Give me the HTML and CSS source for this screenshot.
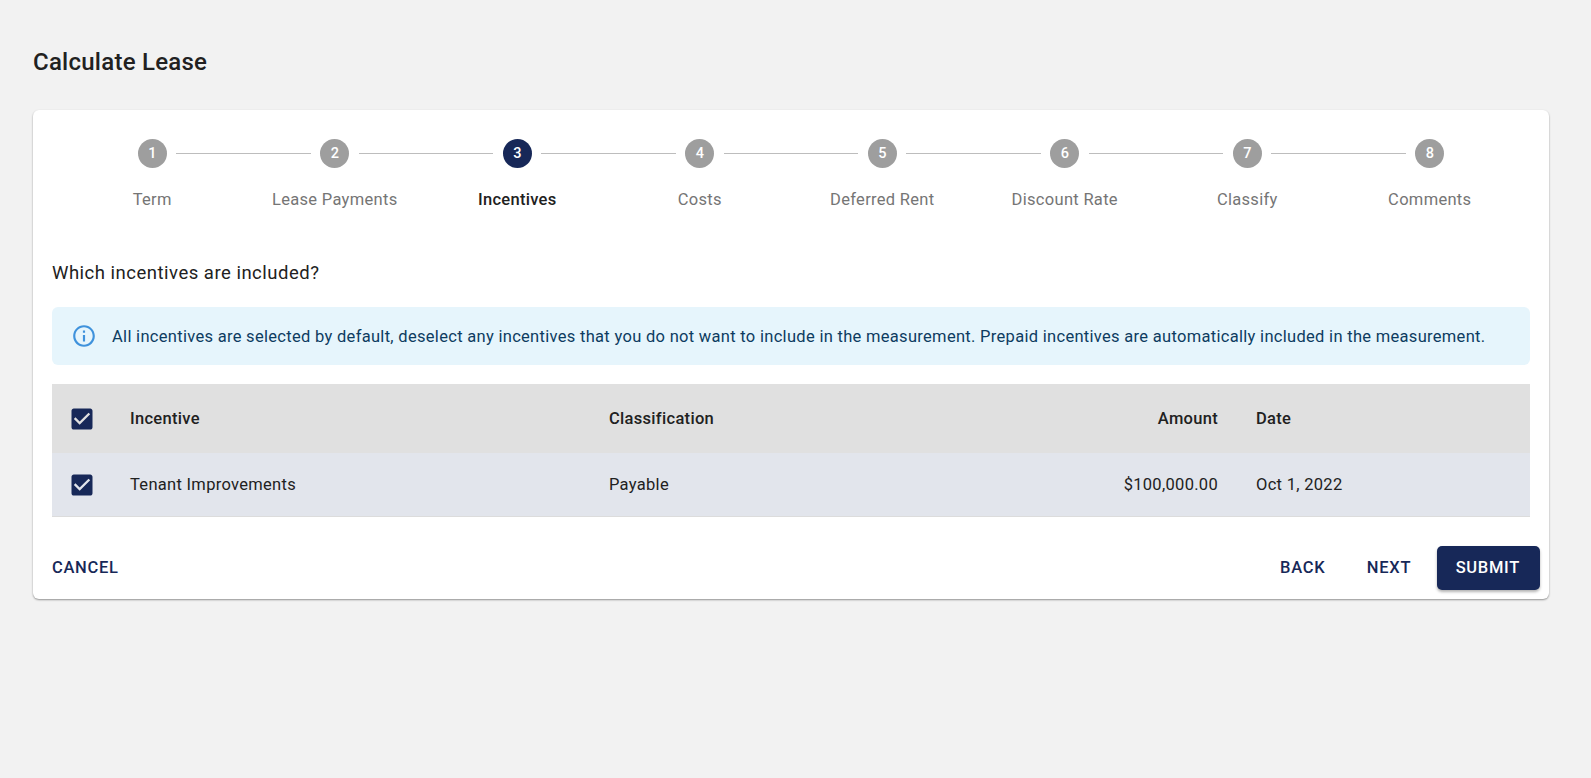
FILE: index.html
```html
<!DOCTYPE html>
<html lang="en">
<head>
<meta charset="utf-8">
<title>Calculate Lease</title>
<link rel="stylesheet" href="styles.css">
</head>
<body>
<main class="page">
  <h1 class="title">Calculate Lease</h1>
  <section class="card">
    <ol class="stepper">
      <li class="step"><span class="dot">1</span><span class="label">Term</span></li>
      <li class="step"><span class="dot">2</span><span class="label">Lease Payments</span></li>
      <li class="step active"><span class="dot">3</span><span class="label">Incentives</span></li>
      <li class="step"><span class="dot">4</span><span class="label">Costs</span></li>
      <li class="step"><span class="dot">5</span><span class="label">Deferred Rent</span></li>
      <li class="step"><span class="dot">6</span><span class="label">Discount Rate</span></li>
      <li class="step"><span class="dot">7</span><span class="label">Classify</span></li>
      <li class="step"><span class="dot">8</span><span class="label">Comments</span></li>
    </ol>
    <h2 class="question">Which incentives are included?</h2>
    <div class="alert">
      <svg class="alert-icon" viewBox="0 0 24 24" aria-hidden="true"><path d="M11 7h2v2h-2zm0 4h2v6h-2zm1-9C6.48 2 2 6.48 2 12s4.48 10 10 10 10-4.48 10-10S17.52 2 12 2zm0 18c-4.41 0-8-3.59-8-8s3.59-8 8-8 8 3.59 8 8-3.59 8-8 8z"/></svg>
      <p class="alert-text">All incentives are selected by default, deselect any incentives that you do not want to include in the measurement. Prepaid incentives are automatically included in the measurement.</p>
    </div>
    <div class="table">
      <div class="row head">
        <span class="check"><svg viewBox="0 0 24 24" aria-hidden="true"><path d="M19 3H5c-1.11 0-2 .9-2 2v14c0 1.1.89 2 2 2h14c1.11 0 2-.9 2-2V5c0-1.100-.89-2-2-2zm-9 14l-5-5 1.410-1.410L10 14.170l7.590-7.590L19 8l-9 9z"/></svg></span>
        <span>Incentive</span>
        <span>Classification</span>
        <span class="num">Amount</span>
        <span>Date</span>
      </div>
      <div class="row body">
        <span class="check"><svg viewBox="0 0 24 24" aria-hidden="true"><path d="M19 3H5c-1.11 0-2 .9-2 2v14c0 1.1.89 2 2 2h14c1.11 0 2-.9 2-2V5c0-1.100-.89-2-2-2zm-9 14l-5-5 1.410-1.410L10 14.170l7.590-7.590L19 8l-9 9z"/></svg></span>
        <span>Tenant Improvements</span>
        <span>Payable</span>
        <span class="num">$100,000.00</span>
        <span>Oct 1, 2022</span>
      </div>
    </div>
    <div class="actions">
      <button class="btn cancel" type="button">Cancel</button>
      <div class="actions-right">
        <button class="btn" type="button">Back</button>
        <button class="btn" type="button">Next</button>
        <button class="btn primary" type="button">Submit</button>
      </div>
    </div>
  </section>
</main>
</body>
</html>
```
FILE: styles.css
```css
* { box-sizing: border-box; }
html, body { margin: 0; height: 100%; }
body {
  background: #f2f2f2;
  font-family: Roboto, "Liberation Sans", sans-serif;
  color: #212121;
}
.page { padding: 47px 42px 0 33px; }
.title {
  margin: 0 0 33px;
  font-size: 24px;
  line-height: 30px;
  font-weight: 500;
  letter-spacing: 0.25px;
}
.card {
  background: #fff;
  border-radius: 6px;
  padding: 29px 19px 9px;
  height: 489px;
  box-shadow: 0 1px 2px rgba(0,0,0,.4);
}
.stepper {
  list-style: none;
  margin: 0;
  padding: 0 9px;
  display: grid;
  grid-template-columns: repeat(8, 1fr);
}
.step {
  position: relative;
  display: flex;
  flex-direction: column;
  align-items: center;
  gap: 21px;
}
.step + .step::before {
  content: "";
  position: absolute;
  top: 14px;
  left: calc(-50% + 24px);
  right: calc(50% + 24px);
  border-top: 1px solid #bdbdbd;
}
.dot {
  width: 29px;
  height: 29px;
  border-radius: 50%;
  background: #9e9e9e;
  color: #fff;
  font-size: 14.500px;
  font-weight: 500;
  line-height: 29px;
  text-align: center;
}
.label {
  font-size: 16.500px;
  line-height: 22px;
  color: #757575;
  letter-spacing: 0.3px;
}
.active .dot { background: #172858; }
.active .label { color: #212121; font-weight: 500; }
.question {
  margin: 49px 0 0;
  font-size: 18.500px;
  line-height: 26px;
  font-weight: 400;
  letter-spacing: 0.5px;
}
.alert {
  margin-top: 21px;
  height: 58px;
  border-radius: 6px;
  background: #e6f5fc;
  color: #0d3c61;
  display: flex;
  align-items: center;
  gap: 15px;
  padding: 0 19px;
}
.alert-icon { width: 26px; height: 26px; fill: #3f92dc; flex: none; }
.alert-text { margin: 0; font-size: 16.500px; letter-spacing: 0.3px; white-space: nowrap; }
.table { margin-top: 19px; }
.row {
  display: grid;
  grid-template-columns: 78px 479px 479px 130px 1fr;
  align-items: center;
  font-size: 16.500px;
  letter-spacing: 0.3px;
}
.head { height: 69px; background: #e0e0e0; font-weight: 500; }
.body { height: 64px; background: #e2e5ec; border-bottom: 1px solid #dcdcdc; }
.num { text-align: right; }
.row > :last-child { padding-left: 38px; }
.check { display: flex; padding-left: 16px; }
.check svg { width: 28px; height: 28px; fill: #172858; display: block; }
.actions {
  margin-top: 29px;
  margin-right: -10px;
  display: flex;
  justify-content: space-between;
  align-items: center;
}
.actions-right { display: flex; align-items: center; gap: 10px; }
.btn {
  font-family: inherit;
  font-size: 16.500px;
  font-weight: 500;
  letter-spacing: 0.7px;
  text-transform: uppercase;
  color: #172858;
  background: none;
  border: 0;
  border-radius: 5px;
  height: 44px;
  padding: 0 15.500px 2px 16px;
}
.cancel { padding-left: 0; }
.primary {
  padding: 0 20px 2px 19px;
  background: #172858;
  color: #fff;
  box-shadow: 0 2px 3px rgba(0,0,0,.3);
}
```
